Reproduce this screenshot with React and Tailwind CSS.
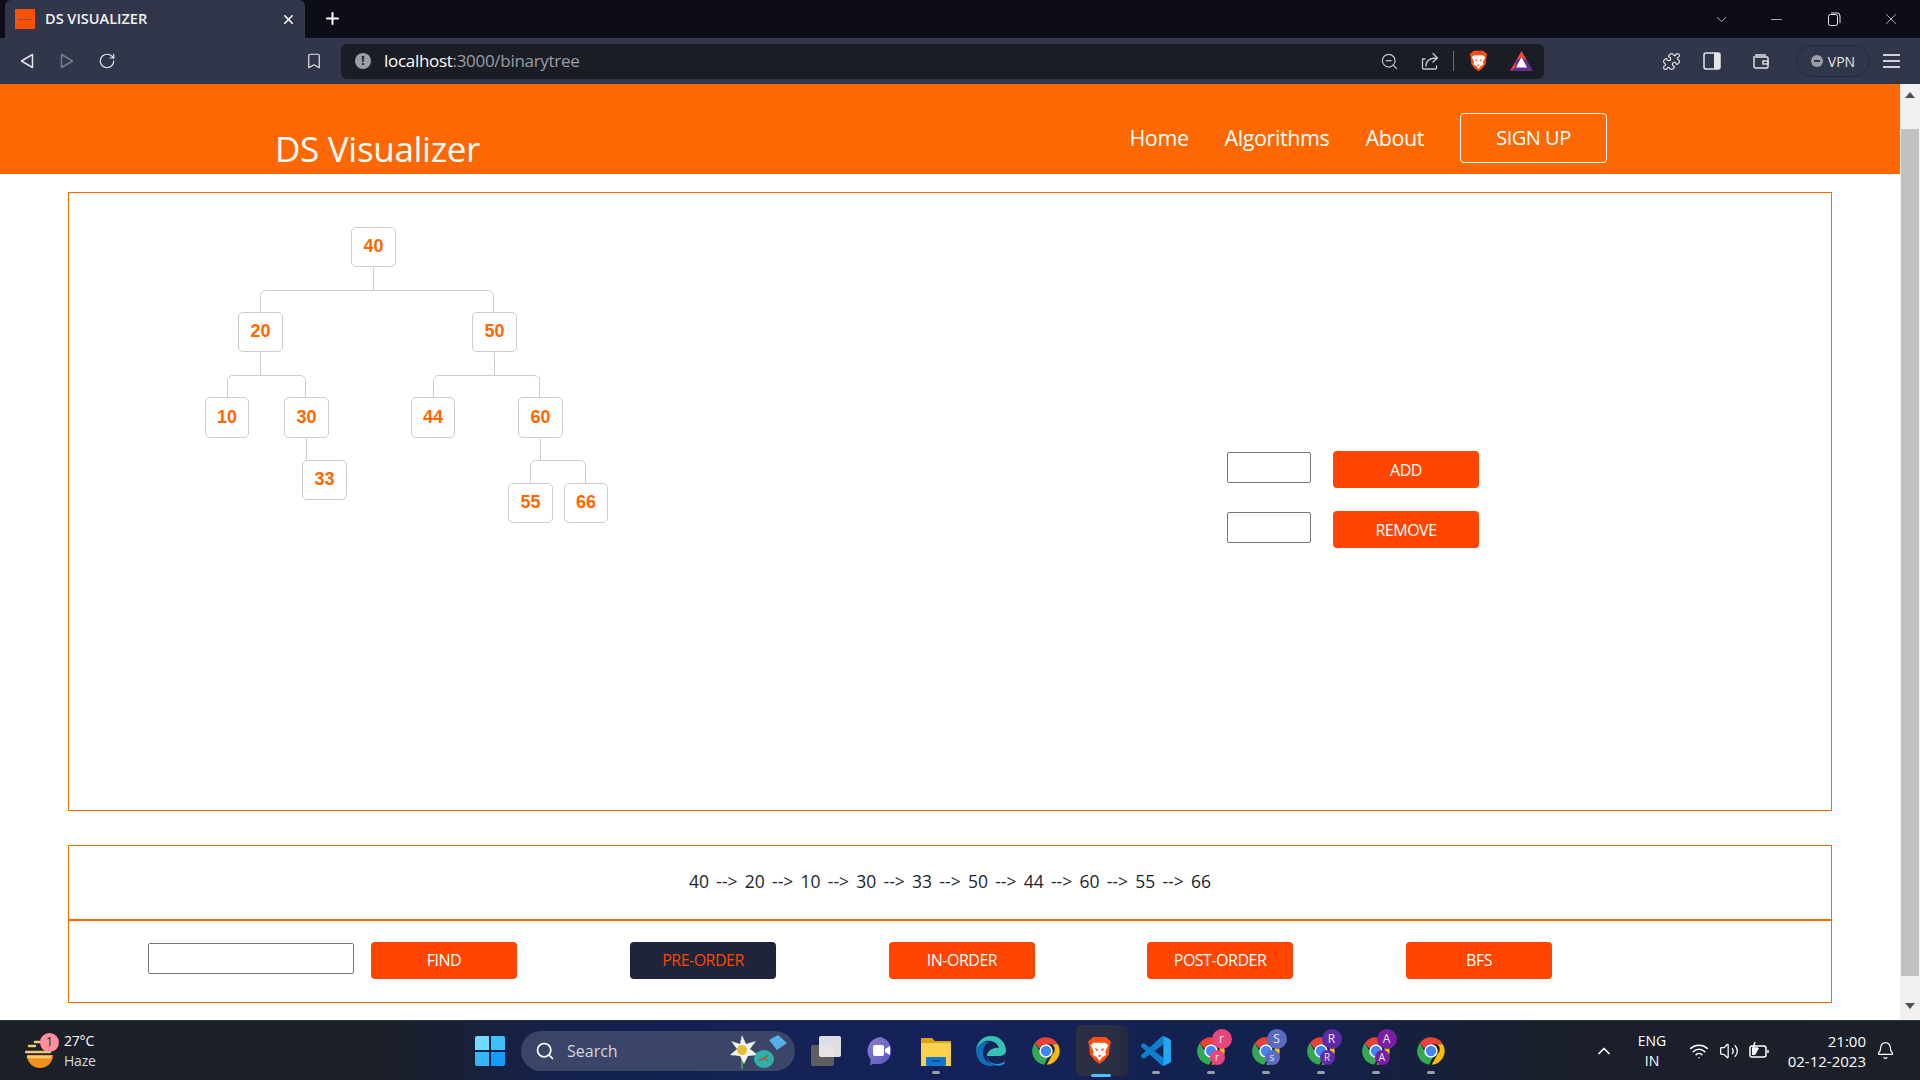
import { Plus, X, Minus, ChevronDown, ChevronUp, Search, Bookmark, ZoomOut, Puzzle, Wifi, Volume2, Bell, RotateCw } from 'lucide-react'

const nodes = [
  { v: 40, x: 351, y: 227, w: 45, h: 40 },
  { v: 20, x: 238, y: 312, w: 45, h: 40 },
  { v: 50, x: 472, y: 312, w: 45, h: 40 },
  { v: 10, x: 205, y: 397, w: 44, h: 41 },
  { v: 30, x: 284, y: 397, w: 45, h: 41 },
  { v: 44, x: 411, y: 397, w: 44, h: 41 },
  { v: 60, x: 518, y: 397, w: 45, h: 41 },
  { v: 33, x: 302, y: 460, w: 45, h: 40 },
  { v: 55, x: 508, y: 483, w: 45, h: 40 },
  { v: 66, x: 564, y: 483, w: 44, h: 40 },
]

// coordinates of the tree panel start at the orange box corner
const originX = 69
const originY = 193

function BinaryTree() {
  return (
    <div className="relative w-[600px] h-full shrink-0">
      <svg className="absolute left-0 top-0" width="600" height="400" fill="none" stroke="#cccccc" strokeWidth="1">
        <g transform={`translate(${-originX + 0.5} ${-originY + 0.5})`}>
          <path d="M373 267V290M260 312V295a5 5 0 0 1 5-5H488a5 5 0 0 1 5 5V312" />
          <path d="M260 352V375M227 397V380a5 5 0 0 1 5-5H300a5 5 0 0 1 5 5V397" />
          <path d="M494 352V375M433 397V380a5 5 0 0 1 5-5H534a5 5 0 0 1 5 5V397" />
          <path d="M306 438V460" />
          <path d="M540 438V460M530 483V465a5 5 0 0 1 5-5H580a5 5 0 0 1 5 5V483" />
        </g>
      </svg>
      {nodes.map(n => (
        <div
          key={n.v}
          className="absolute flex items-center justify-center pb-[1px] bg-white border border-[#cccccc] rounded-[5px] text-[#ff6600] font-bold text-[18px] font-['Liberation_Sans',sans-serif]"
          style={{ left: n.x - originX, top: n.y - originY, width: n.w, height: n.h }}
        >
          {n.v}
        </div>
      ))}
    </div>
  )
}

function OrangeButton({ children, dark }) {
  return (
    <button className={`w-[146px] h-[37px] rounded-[4px] text-[16px] tracking-[-0.5px] ${dark ? 'bg-[#1e2439] text-[#ff4500]' : 'bg-[#ff4500] text-white'}`}>
      {children}
    </button>
  )
}

function ChromeIcon({ badge, small, color }) {
  return (
    <div className="relative w-[30px] h-[30px]">
      <svg viewBox="0 0 48 48" width="30" height="30">
        <path d="M24 2a22 22 0 0 1 19 11H24a11 11 0 0 0-10.400 7.400L6.200 11A22 22 0 0 1 24 2z" fill="#ea4335" />
        <path d="M43 13a22 22 0 0 1-18 33l9-16a11 11 0 0 0 0-17z" fill="#fbbc04" />
        <path d="M6.200 11l9.300 16a11 11 0 0 0 11.500 7.500L21 46A22 22 0 0 1 6.200 11z" fill="#34a853" />
        <circle cx="24" cy="24" r="9.500" fill="#4285f4" stroke="#fff" strokeWidth="2.500" />
      </svg>
      {badge && (
        <>
          <div className={`absolute left-[16px] top-[-7px] w-[20px] h-[20px] rounded-full flex items-center justify-center text-[12px] text-[#e8e8f0] ${color}`}>{badge}</div>
          <div className={`absolute left-[14px] top-[14px] w-[15px] h-[15px] rounded-full flex items-center justify-center text-[10px] text-[#e8e8f0] ${color}`}>{small}</div>
        </>
      )}
    </div>
  )
}

function BraveLion({ size }) {
  return (
    <svg viewBox="0 0 24 28" width={size} height={size * 28 / 24}>
      <path d="M6 1h12l3 2.500 2 2-1 3.500-1 9-5 6-4 3-4-3-5-6-1-9-1-3.500 2-2z" fill="#fb4f17" />
      <path d="M6.500 6.500h11l3 2.500-3 6 1 3-4 2.500-2.500 3.500-2.500-3.500-4-2.500 1-3-3-6z" fill="#fff" />
      <path d="M7.500 11.500l3.500 1.500-2 1.500zM16.500 11.500l-3.500 1.500 2 1.500z" fill="#fb4f17" />
      <path d="M10 18.500h4l-2 2z" fill="#fb4f17" />
    </svg>
  )
}

function TaskSlot({ children, dot }) {
  return (
    <div className="relative w-[55px] h-full flex items-center justify-center">
      {children}
      {dot && <div className="absolute bottom-[6px] left-[24px] w-[8px] h-[3px] rounded-full bg-[#9a9ea8]" />}
    </div>
  )
}

function TabBar() {
  return (
    <div className="h-[38px] bg-[#0c0d16] flex items-end text-white shrink-0">
      <div className="ml-[5px] w-[300px] h-[38px] bg-[#32364a] rounded-t-[6px] flex items-center pl-[10px]">
        <div className="w-[20px] h-[20px] bg-[#ff5000] flex items-center justify-center">
          <div className="w-[14px] h-[1px] bg-[#7a5050]" />
        </div>
        <span className="ml-[10px] text-[14.500px] font-semibold text-[#f1f2f4]">DS VISUALIZER</span>
        <X className="ml-auto mr-[9px]" size={15} strokeWidth={2.5} />
      </div>
      <Plus className="ml-[18px] mb-[10px]" size={19} strokeWidth={2.5} />
      <div className="ml-auto h-full flex items-center text-[#e8e8ea]">
        <ChevronDown className="mr-[38px]" size={17} strokeWidth={1} />
        <Minus className="mr-[42px]" size={17} strokeWidth={1} />
        <svg className="mr-[41px]" width="14" height="14" viewBox="0 0 14 14" fill="none" stroke="currentColor"><rect x="1.500" y="2.500" width="9" height="11" rx="2" /><path d="M4 1h6a3 3 0 0 1 3 3v7" /></svg>
        <X className="mr-[20px]" size={18} strokeWidth={1} />
      </div>
    </div>
  )
}

function Toolbar() {
  return (
    <div className="h-[46px] bg-[#32364a] flex items-center text-[#e4e5e8] shrink-0">
      <svg className="ml-[20px]" width="14" height="16" viewBox="0 0 14 16" fill="none" stroke="currentColor" strokeWidth="1.500" strokeLinejoin="round"><path d="M12.500 1.500v13L1.500 8z" /></svg>
      <svg className="ml-[26px]" width="14" height="16" viewBox="0 0 14 16" fill="none" stroke="#777b8a" strokeWidth="1.500" strokeLinejoin="round"><path d="M1.500 1.500v13L12.500 8z" /></svg>
      <RotateCw className="ml-[24px]" size={18} strokeWidth={1.600} />
      <Bookmark className="ml-[189px]" size={18} strokeWidth={1.600} />
      <div className="ml-[18px] w-[1203px] h-[35px] rounded-[6px] bg-[#1b1d24] flex items-center">
        <div className="ml-[14px] w-[16px] h-[16px] rounded-full bg-[#9a9ea8] flex items-center justify-center text-[#1b1d24] text-[12px] font-bold">!</div>
        <span className="ml-[13px] text-[17px] tracking-[-0.3px] text-white">localhost<span className="text-[#9a9ea8]">:3000/binarytree</span></span>
        <ZoomOut className="ml-auto text-[#c4c6cc]" size={19} strokeWidth={1.500} />
        <svg className="ml-[21px] text-[#c4c6cc]" width="20" height="20" viewBox="0 0 20 20" fill="none" stroke="currentColor" strokeWidth="1.300" strokeLinecap="round" strokeLinejoin="round">
          <path d="M5 8H2.500v9a1 1 0 0 0 1 1h12a1 1 0 0 0 1-1v-2" />
          <path d="M6 15c0-5 4-8 11-8M13 2.500L17.500 7 13 11" />
        </svg>
        <div className="ml-[13px] w-[1px] h-[20px] bg-[#6b6e79]" />
        <div className="ml-[15px]"><BraveLion size={19} /></div>
        <svg className="ml-[22px] mr-[11px]" width="23" height="20" viewBox="0 0 23 20">
          <path d="M11.500 0L23 20H0z" fill="#662d91" />
          <path d="M11.500 0L17 10l-5.500-4L6 10z" fill="#ff4724" />
          <path d="M6 10L0 20l5-3.500z" fill="#ff4724" />
          <path d="M11.500 6l5.500 10.500H6z" fill="#fff" />
        </svg>
      </div>
      <Puzzle className="ml-[118px]" size={19} strokeWidth={1.500} />
      <svg className="ml-[22px]" width="18" height="18" viewBox="0 0 18 18"><rect x="1" y="1" width="16" height="16" rx="2" fill="none" stroke="currentColor" strokeWidth="1.500" /><rect x="11" y="1" width="6" height="16" fill="currentColor" /></svg>
      <svg className="ml-[31px]" width="18" height="18" viewBox="0 0 18 18" fill="none" stroke="currentColor" strokeWidth="1.400"><path d="M3 3h11M2 4v10a2 2 0 0 0 2 2h11a1 1 0 0 0 1-1V6a1 1 0 0 0-1-1H3" /><rect x="11" y="9" width="5" height="3" /></svg>
      <div className="ml-[26px] w-[74px] h-[32px] rounded-full border border-[#262a3a] flex items-center justify-center gap-[5px] text-[14px]">
        <div className="w-[12px] h-[12px] rounded-full bg-[#9a9ea8] flex items-center justify-center"><div className="w-[6px] h-[2px] bg-[#32364a]" /></div>
        VPN
      </div>
      <div className="ml-[13px] w-[17px] flex flex-col gap-[4px]">
        <div className="h-[2px] bg-[#d0d1d6]" />
        <div className="h-[2px] bg-[#d0d1d6]" />
        <div className="h-[2px] bg-[#d0d1d6]" />
      </div>
    </div>
  )
}

function Taskbar() {
  return (
    <div className="h-[60px] shrink-0 border-t border-[#30333f] bg-[linear-gradient(90deg,#1c2029_0%,#1c2029_20%,#13214f_30%,#14225a_50%,#13214c_68%,#1a1f2c_80%,#1c2029_100%)] flex items-center text-white">
      {/* weather */}
      <div className="relative ml-[25px] w-[30px] h-[34px] shrink-0">
        <svg className="absolute left-0 top-[5px]" width="30" height="30" viewBox="0 0 30 30">
          <path d="M2 16a13 13 0 0 0 26 0z" fill="#f0901e" />
          <path d="M4 7h6M10 3h7M1 13h24M3 18h22" stroke="#f3c96c" strokeWidth="2.500" strokeLinecap="round" />
        </svg>
        <div className="absolute left-[15px] top-[-1px] w-[19px] h-[19px] rounded-full bg-[#ff8f9c] text-[#222] text-[12px] flex items-center justify-center">1</div>
      </div>
      <div className="ml-[9px] w-[60px] shrink-0 text-[14px] leading-[20px] tracking-[-0.2px]">
        <div>27°C</div>
        <div className="text-[#d5d7dc]">Haze</div>
      </div>

      {/* start + search */}
      <div className="ml-[351px] w-[30px] h-[30px] grid grid-cols-2 grid-rows-2 gap-[2px] shrink-0">
        <div className="rounded-tl-[2px] bg-[#6fdcff]" />
        <div className="rounded-tr-[2px] bg-[#3fc0fb]" />
        <div className="rounded-bl-[2px] bg-[#35b6fa]" />
        <div className="rounded-br-[2px] bg-[#149cfa]" />
      </div>
      <div className="ml-[16px] w-[274px] h-[40px] rounded-full bg-[#3a4568] flex items-center shrink-0">
        <Search className="ml-[14px]" size={20} strokeWidth={2} />
        <span className="ml-[12px] text-[16px] text-[#d5d7dc]">Search</span>
        <svg className="ml-auto mr-[7px]" width="62" height="38" viewBox="0 0 62 38">
          <path d="M16 24v13" stroke="#5da84a" strokeWidth="1.500" />
          <path d="M16 3l4 9 10-3-6 8 8 6-10 1-4 8-4-8-10-1 7-6-6-8 9 3z" fill="#f4f3f0" />
          <circle cx="16" cy="18" r="5" fill="#e3c02f" />
          <ellipse cx="38" cy="27" rx="10" ry="9" fill="#2fb0ab" />
          <path d="M33 28c3 0 6-1 9-5M38 26l4 3" stroke="#b5532c" strokeWidth="1.500" fill="none" />
          <path d="M43 8l9-5 9 8-10 7z" fill="#55aeea" />
        </svg>
      </div>

      {/* pinned apps */}
      <div className="ml-[3px] h-full flex">
        <TaskSlot>
          <div className="relative w-[30px] h-[30px]">
            <div className="absolute left-0 bottom-0 w-[23px] h-[21px] bg-[#5e5e60] rounded-[2px]" />
            <div className="absolute right-0 top-0 w-[22px] h-[21px] bg-[#f3f3f3]/90 rounded-[2px]" />
          </div>
        </TaskSlot>
        <TaskSlot>
          <svg width="30" height="30" viewBox="0 0 30 30">
            <defs>
              <linearGradient id="meetFill" x1="0" y1="0" x2="1" y2="1">
                <stop offset="0" stopColor="#8d7fc9" />
                <stop offset="1" stopColor="#5457c4" />
              </linearGradient>
            </defs>
            <path d="M15 1a14 14 0 0 1 0 27H7l-3 1.500.5-6A14 14 0 0 1 15 1z" fill="url(#meetFill)" />
            <rect x="7" y="9" width="11" height="11" rx="2" fill="#fff" />
            <path d="M19 13l5-3v9l-5-3z" fill="#fff" />
          </svg>
        </TaskSlot>
        <TaskSlot dot>
          <svg width="30" height="30" viewBox="0 0 30 30">
            <path d="M0 2h11l3 3h16v25H0z" fill="#e0a010" />
            <path d="M0 7h30v23H0z" fill="#fbd24e" />
            <rect x="5" y="21" width="20" height="9" rx="1" fill="#0f78d4" />
            <rect x="11" y="24" width="8" height="2" fill="#0a4f96" />
          </svg>
        </TaskSlot>
        <TaskSlot>
          <svg width="30" height="30" viewBox="0 0 30 30">
            <path d="M15 0C25 0 30 8 30 15c0 3-3 5-7 5H11c0-5 6-9 12-8-2-6-8-8-13-7C6 6 2 10 0 14 1 6 7 0 15 0z" fill="#35c1b5" />
            <path d="M0 14c2-6 8-9 13-8-4 2-6 6-6 11 0 6 5 11 12 12-2 1-4 1-5 1C6 30 0 23 0 14z" fill="#0d6fb8" />
            <path d="M11 20c0 5 5 8 10 8 3 0 6-1 8-3l-1 3c-3 2-6 2-9 1-5-1-9-5-8-9z" fill="#1a9fe0" />
          </svg>
        </TaskSlot>
        <TaskSlot><ChromeIcon /></TaskSlot>
        <TaskSlot>
          <div className="absolute left-[3px] top-[4px] bottom-[4px] w-[52px] rounded-[5px] bg-[#242a40]" />
          <div className="absolute left-[3px] top-[4px] bottom-[4px] w-[44px] rounded-[5px] bg-[#2a2f44]" />
          <div className="absolute bottom-[3px] left-[18px] w-[20px] h-[3px] rounded-full bg-[#4cc2ff]" />
          <div className="relative -ml-[3px]"><BraveLion size={25} /></div>
        </TaskSlot>
        <TaskSlot dot>
          <svg width="30" height="30" viewBox="0 0 100 100">
            <path d="M96 10.800L75.400.9a6.200 6.200 0 0 0-7.100 1.200L28.900 38 11.700 25a4.200 4.200 0 0 0-5.300.2L.9 30.300a4.200 4.200 0 0 0 0 6.200L15.800 50 .9 63.500a4.200 4.200 0 0 0 0 6.200l5.500 5a4.200 4.200 0 0 0 5.300.3L28.900 62l39.400 35.900a6.200 6.200 0 0 0 7.100 1.200L96 89.200a6.200 6.200 0 0 0 3.500-5.600V16.400a6.200 6.200 0 0 0-3.500-5.600zM75 72.700L45.100 50 75 27.300z" fill="#0f7fcc" />
            <path d="M75 .3V99.700l21-10.500a6 6 0 0 0 3.500-5.600V16.400A6 6 0 0 0 96 10.800z" fill="#22a7f0" />
          </svg>
        </TaskSlot>
        <TaskSlot dot><ChromeIcon badge="r" small="r" color="bg-[#e8457f]" /></TaskSlot>
        <TaskSlot dot><ChromeIcon badge="S" small="s" color="bg-[#5c6bc0]" /></TaskSlot>
        <TaskSlot dot><ChromeIcon badge="R" small="R" color="bg-[#5e2aa8]" /></TaskSlot>
        <TaskSlot dot><ChromeIcon badge="A" small="A" color="bg-[#7b1fa2]" /></TaskSlot>
        <TaskSlot dot><ChromeIcon /></TaskSlot>
      </div>

      {/* tray */}
      <ChevronUp className="ml-[136px] shrink-0" size={20} strokeWidth={2} />
      <div className="ml-[14px] w-[48px] shrink-0 text-center text-[14px] leading-[20px]">
        <div>ENG</div>
        <div>IN</div>
      </div>
      <Wifi className="ml-[13px] shrink-0" size={20} strokeWidth={1.800} />
      <Volume2 className="ml-[10px] shrink-0" size={20} strokeWidth={1.500} />
      <svg className="ml-[10px] shrink-0" width="21" height="18" viewBox="0 0 21 18" fill="none" stroke="currentColor" strokeWidth="1.500">
        <rect x="1" y="4" width="16" height="11" rx="2" />
        <path d="M19 8v3" />
        <path d="M3 6h7l-4 7H3z" fill="currentColor" stroke="none" />
        <path d="M6 0L4 6h4L6 12" />
      </svg>
      <div className="ml-auto w-[85px] shrink-0 text-right text-[15px] leading-[20px]">
        <div>21:00</div>
        <div>02-12-2023</div>
      </div>
      <Bell className="ml-[10px] mr-[25px] shrink-0" size={19} strokeWidth={1.500} />
    </div>
  )
}

function App() {
  return (
    <div className="w-[1920px] h-[1080px] flex flex-col overflow-hidden font-['Open_Sans',sans-serif] bg-white">
      <TabBar />
      <Toolbar />

      <div className="flex-1 flex min-h-0">
        <div className="flex-1 min-w-0">
          {/* header */}
          <header className="h-[90px] bg-[#ff6700] flex text-white">
            <div className="ml-[275px] mt-[41px] text-[35px] leading-[48px] tracking-[-0.3px]">DS Visualizer</div>
            <nav className="ml-auto mr-[293px] pt-[18px] flex items-center text-[21.500px] tracking-[-0.4px]">
              <a>Home</a>
              <a className="ml-[36px]">Algorithms</a>
              <a className="ml-[36px]">About</a>
              <button className="ml-[36px] w-[147px] h-[50px] border border-white rounded-[4px] text-[20px] tracking-[-0.5px]">SIGN UP</button>
            </nav>
          </header>

          {/* tree + add / remove */}
          <section className="mt-[18px] mx-[68px] h-[619px] border border-[#ff6600] flex">
            <BinaryTree />
            <div className="ml-[558px] mt-[258px] flex flex-col gap-[23px]">
              <div className="flex items-start gap-[22px]">
                <input className="mt-[1px] w-[84px] h-[31px] border border-[#767676] rounded-[2px]" />
                <OrangeButton>ADD</OrangeButton>
              </div>
              <div className="flex items-start gap-[22px]">
                <input className="mt-[1px] w-[84px] h-[31px] border border-[#767676] rounded-[2px]" />
                <OrangeButton>REMOVE</OrangeButton>
              </div>
            </div>
          </section>

          {/* traversal */}
          <section className="mt-[34px] mx-[68px] h-[158px] border border-[#ff6600] flex flex-col">
            <div className="h-[73px] pb-[2px] flex items-center justify-center text-[17.500px] [word-spacing:2.7px] text-[#212529]">
              {'40 --> 20 --> 10 --> 30 --> 33 --> 50 --> 44 --> 60 --> 55 --> 66'}
            </div>
            <div className="h-[2px] bg-[#ff6600]" />
            <div className="flex-1 flex items-center pl-[79px] pb-[3px]">
              <input className="-mt-[3px] w-[206px] h-[31px] border border-[#767676] rounded-[2px]" />
              <div className="ml-[17px]"><OrangeButton>FIND</OrangeButton></div>
              <div className="ml-[113px]"><OrangeButton dark>PRE-ORDER</OrangeButton></div>
              <div className="ml-[113px]"><OrangeButton>IN-ORDER</OrangeButton></div>
              <div className="ml-[112px]"><OrangeButton>POST-ORDER</OrangeButton></div>
              <div className="ml-[113px]"><OrangeButton>BFS</OrangeButton></div>
            </div>
          </section>
        </div>

        {/* scrollbar */}
        <div className="w-[20px] bg-[#f1f1f1] flex flex-col items-center shrink-0">
          <div className="mt-[8px] w-0 h-0 border-x-[5px] border-x-transparent border-b-[6px] border-b-[#505050]" />
          <div className="mt-[31px] w-[18px] h-[847px] bg-[#c1c1c1]" />
          <div className="mt-[27px] w-0 h-0 border-x-[5px] border-x-transparent border-t-[6px] border-t-[#505050]" />
        </div>
      </div>

      <Taskbar />
    </div>
  )
}

export default App
